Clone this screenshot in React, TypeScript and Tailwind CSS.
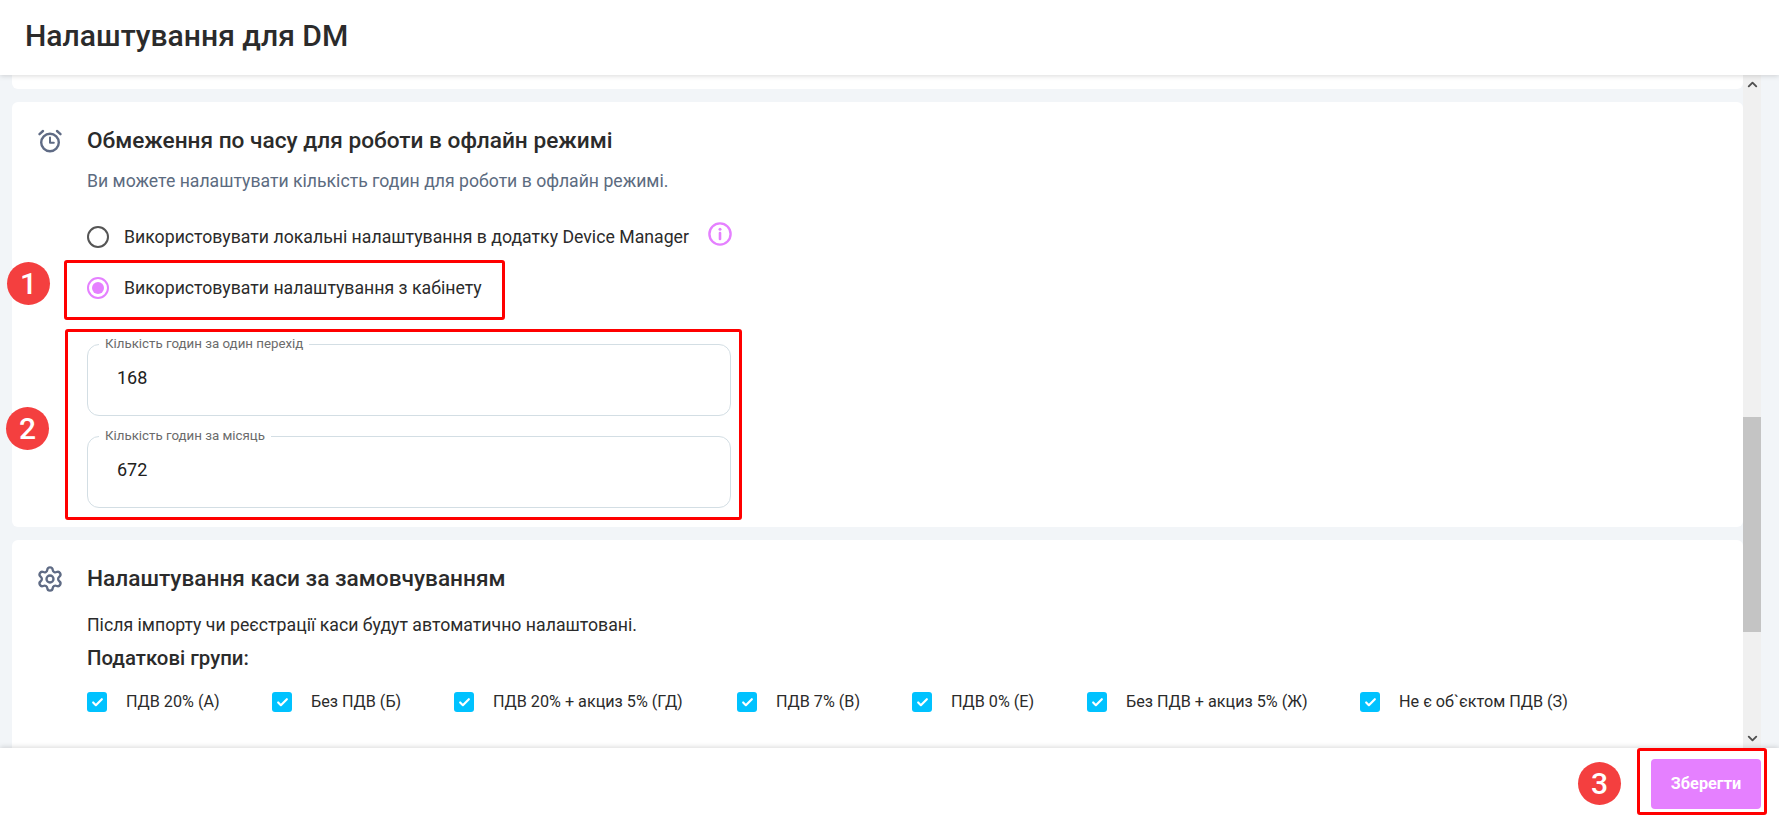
import { Check, ChevronDown, ChevronUp, Settings } from 'lucide-react'

const taxGroups = [
    { label: 'ПДВ 20% (А)', width: 'w-[185px]' },
    { label: 'Без ПДВ (Б)', width: 'w-[182px]' },
    { label: 'ПДВ 20% + акциз 5% (ГД)', width: 'w-[283px]' },
    { label: 'ПДВ 7% (В)', width: 'w-[175px]' },
    { label: 'ПДВ 0% (Е)', width: 'w-[175px]' },
    { label: 'Без ПДВ + акциз 5% (Ж)', width: 'w-[273px]' },
    { label: 'Не є об`єктом ПДВ (З)', width: 'w-[220px]' },
]

function AlarmIcon() {
    return (
        <svg width="26" height="26" viewBox="0 0 26 26" fill="none" stroke="#5f6b85" strokeWidth="2.4" strokeLinecap="round" strokeLinejoin="round" className="mt-[1px] shrink-0">
            <circle cx="13" cy="14.5" r="8.8" />
            <path d="M13 9.5v5.2h3.8" strokeWidth="2" />
            <path d="M2.5 6.2 6 3" />
            <path d="M23.5 6.2 20 3" />
        </svg>
    )
}

function InfoIcon() {
    return (
        <svg width="24" height="24" viewBox="0 0 24 24" fill="none" stroke="#e580ff" strokeWidth="2.4" strokeLinecap="round" className="ml-[19px] -mt-[6px] shrink-0">
            <circle cx="12" cy="12" r="10.6" />
            <path d="M12 11v6" strokeWidth="2.6" />
            <circle cx="12" cy="7.2" r="1.5" fill="#e580ff" stroke="none" />
        </svg>
    )
}

function HoursField({ label, value, className }: { label: string; value: string; className: string }) {
    return (
        <fieldset className={`w-[644px] rounded-xl border border-[#d3dee4] pl-[11px] ${className}`}>
            <legend className="px-[6px] text-[13.3px] leading-[14px] text-[#6b6b6b]">{label}</legend>
            <div className="pl-[18px] pt-[15px] text-[18px] leading-[24px] text-[#212121]">{value}</div>
        </fieldset>
    )
}

function Marker({ n, className }: { n: number; className: string }) {
    return (
        <div className={`absolute flex h-[43px] w-[43px] items-center justify-center rounded-full bg-[#f43f3f] text-[30px] font-medium text-white ${className}`}>
            {n}
        </div>
    )
}

function Frame({ className }: { className: string }) {
    return <div className={`absolute rounded-[3px] border-[3px] border-[#ff0000] ${className}`} />
}

export default function App() {
    return (
        <div className="relative flex h-[818px] w-[1779px] flex-col overflow-hidden bg-white font-['Roboto',sans-serif] text-[#2b2b2b]">
            {/* Header */}
            <header className="relative z-10 flex h-[75px] shrink-0 items-center bg-white pb-[4px] pl-[25px] shadow-[0_1px_5px_rgba(0,0,0,0.15)]">
                <h1 className="text-[30.1px] font-medium leading-[36px] text-[#2b2b2b]">Налаштування для DM</h1>
            </header>

            {/* Scroll area */}
            <div className="flex min-h-0 flex-1 bg-[#f2f5f8]">
                <main className="flex min-w-0 flex-1 flex-col overflow-hidden pl-[12px]">
                    <div className="h-[14px] shrink-0 rounded-b-[6px] bg-white" />

                    <section className="mt-[13px] flex h-[425px] shrink-0 rounded-[6px] bg-white pl-[25px] pt-[25px]">
                        <AlarmIcon />
                        <div className="ml-[24px]">
                            <h2 className="text-[22.65px] font-medium leading-[28px] text-[#2b2b2b]">Обмеження по часу для роботи в офлайн режимі</h2>
                            <p className="mt-[14px] text-[17.65px] leading-[24px] text-[#5c6b80]">Ви можете налаштувати кількість годин для роботи в офлайн режимі.</p>

                            <div className="mt-[28px] flex h-[32px] items-center">
                                <span className="h-[22px] w-[22px] rounded-full border-2 border-[#555555]" />
                                <span className="ml-[15px] text-[17.7px] text-[#2b2b2b]">Використовувати локальні налаштування в додатку Device Manager</span>
                                <InfoIcon />
                            </div>
                            <div className="mt-[19px] flex h-[32px] items-center">
                                <span className="flex h-[22px] w-[22px] items-center justify-center rounded-full border-2 border-[#e580ff]">
                                    <span className="h-[12px] w-[12px] rounded-full bg-[#e580ff]" />
                                </span>
                                <span className="ml-[15px] text-[17.7px] text-[#2b2b2b]">Використовувати налаштування з кабінету</span>
                            </div>

                            <HoursField label="Кількість годин за один перехід" value="168" className="mt-[33px] h-[79px]" />
                            <HoursField label="Кількість годин за місяць" value="672" className="mt-[13px] h-[79px]" />
                        </div>
                    </section>

                    <section className="mt-[13px] flex flex-1 rounded-t-[6px] bg-white pl-[24px] pt-[24px]">
                        <Settings size={28} strokeWidth={2} className="mt-[1px] shrink-0 text-[#5f6b85]" />
                        <div className="ml-[23px] mt-[1px] min-w-0 flex-1">
                            <h2 className="text-[22.65px] font-medium leading-[28px] text-[#2b2b2b]">Налаштування каси за замовчуванням</h2>
                            <p className="mt-[20px] text-[17.7px] leading-[24px] text-[#2b2b2b]">Після імпорту чи реєстрації каси будут автоматично налаштовані.</p>
                            <h3 className="mt-[9px] text-[20.4px] font-medium leading-[24px] text-[#2b2b2b]">Податкові групи:</h3>
                            <div className="mt-[22px] flex">
                                {taxGroups.map((group) => (
                                    <label key={group.label} className={`flex h-[20px] shrink-0 items-center ${group.width}`}>
                                        <span className="flex h-[20px] w-[20px] items-center justify-center rounded-[3px] bg-[#00c2ff]">
                                            <Check size={13} strokeWidth={4} className="text-white" />
                                        </span>
                                        <span className="ml-[19px] whitespace-nowrap text-[16.2px] text-[#2b2b2b]">{group.label}</span>
                                    </label>
                                ))}
                            </div>
                        </div>
                    </section>
                </main>

                {/* Scrollbar */}
                <div className="flex w-[18px] shrink-0 flex-col items-center bg-[#f0f0f0]">
                    <ChevronUp size={15} strokeWidth={3} className="mt-[1px] h-[17px] shrink-0 text-[#505050]" />
                    <div className="mt-[324px] h-[215px] w-full shrink-0 bg-[#c4c4c4]" />
                    <div className="flex-1" />
                    <ChevronDown size={15} strokeWidth={3} className="mb-[1px] h-[17px] shrink-0 text-[#505050]" />
                </div>
                <div className="w-[18px] shrink-0" />
            </div>

            {/* Footer */}
            <footer className="relative z-10 flex h-[70px] shrink-0 items-start justify-end bg-white pr-[18px] pt-[11px] shadow-[0_-1px_5px_rgba(0,0,0,0.15)]">
                <button className="h-[50px] w-[110px] rounded-[4px] bg-[#e580ff] text-[16.3px] font-bold text-white">Зберегти</button>
            </footer>

            {/* Annotations */}
            <Frame className="left-[64px] top-[260px] h-[60px] w-[441px]" />
            <Frame className="left-[65px] top-[329px] h-[191px] w-[677px]" />
            <Frame className="left-[1637px] top-[748px] z-20 h-[67px] w-[130px]" />
            <Marker n={1} className="left-[7px] top-[262px]" />
            <Marker n={2} className="left-[6px] top-[407px]" />
            <Marker n={3} className="left-[1578px] top-[762px] z-20" />
        </div>
    )
}
